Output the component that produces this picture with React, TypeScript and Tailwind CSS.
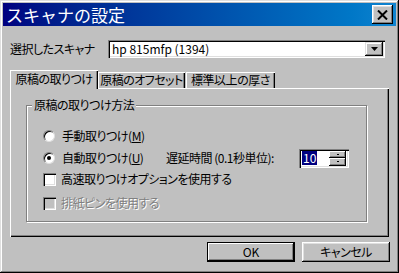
import React from 'react'

const font = "font-['Noto_Sans_CJK_JP',sans-serif] [font-feature-settings:'palt']"

function Radio({ checked }: { checked?: boolean }) {
  return (
    <div className="w-[12px] h-[12px] rounded-full bg-white border border-t-[#808080] border-l-[#808080] border-r-[#dfdfdf] border-b-[#dfdfdf] shadow-[inset_1px_1px_#000] flex items-center justify-center shrink-0">
      {checked && <div className="w-[4px] h-[4px] rounded-full bg-black" />}
    </div>
  )
}

function Check({ disabled }: { disabled?: boolean }) {
  return (
    <div
      className={`w-[13px] h-[13px] shrink-0 shadow-[inset_1px_1px_#808080,inset_2px_2px_#000,inset_-1px_-1px_#fff,inset_-2px_-2px_#dfdfdf] ${
        disabled ? 'bg-[#c0c0c0]' : 'bg-white'
      }`}
    />
  )
}

export default function App() {
  return (
    <div
      className={`w-[399px] h-[273px] bg-[#c0c0c0] p-[3px] flex flex-col text-[12px] leading-none tracking-[-0.5px] text-black shadow-[inset_-1px_-1px_#000,inset_1px_1px_#dfdfdf,inset_-2px_-2px_#808080,inset_2px_2px_#fff] ${font}`}
    >
      {/* Title bar */}
      <div className="h-[23px] flex items-center bg-gradient-to-r from-[#000080] to-[#1084d0] pl-[3px] pr-[3px]">
        <span className="text-white text-[17px] tracking-normal [font-feature-settings:normal]">スキャナの設定</span>
        <button className="ml-auto w-[21px] h-[19px] bg-[#c0c0c0] flex items-center justify-center shadow-[inset_-1px_-1px_#000,inset_1px_1px_#fff,inset_-2px_-2px_#808080,inset_2px_2px_#dfdfdf]">
          <svg width="11" height="10" viewBox="0 0 11 10">
            <path d="M1 0.5 L10 9.5 M10 0.5 L1 9.5" stroke="#000" strokeWidth="2" />
          </svg>
        </button>
      </div>

      {/* Scanner select */}
      <div className="mt-[14px] h-[18px] flex items-center pl-[7px]">
        <span className="w-[98px]">選択したスキャナ</span>
        <div className="w-[277px] h-[18px] bg-white flex items-center shadow-[inset_1px_1px_#808080,inset_2px_2px_#000,inset_-1px_-1px_#fff,inset_-2px_-2px_#dfdfdf] pl-[4px] pr-[2px]">
          <span className="[font-feature-settings:normal] tracking-normal">hp 815mfp (1394)</span>
          <div className="ml-auto w-[18px] h-[14px] bg-[#c0c0c0] flex items-center justify-center shadow-[inset_-1px_-1px_#000,inset_1px_1px_#dfdfdf,inset_-2px_-2px_#808080,inset_2px_2px_#fff]">
            <svg width="7" height="4" viewBox="0 0 7 4">
              <path d="M0 0 H7 L3.5 4 Z" fill="#000" />
            </svg>
          </div>
        </div>
      </div>

      {/* Tabs */}
      <div className="mt-[12px] ml-[7px] h-[18px] flex items-end">
        <div className="relative z-10 h-[19px] -mb-px w-[88px] bg-[#c0c0c0] flex items-center justify-center shadow-[inset_1px_1px_#fff,inset_-1px_0_#000,inset_-2px_0_#808080] pb-[2px]">
          原稿の取りつけ
        </div>
        <div className="h-[16px] w-[87px] flex items-center justify-center shadow-[inset_1px_1px_#fff,inset_-1px_0_#000,inset_-2px_0_#808080]">
          原稿のオフセット
        </div>
        <div className="ml-px h-[16px] w-[89px] flex items-center justify-center shadow-[inset_1px_1px_#fff,inset_-1px_0_#000,inset_-2px_0_#808080]">
          標準以上の厚さ
        </div>
      </div>

      {/* Panel */}
      <div className="ml-[7px] w-[379px] h-[149px] shadow-[inset_1px_1px_#fff,inset_-1px_-1px_#000,inset_-2px_-2px_#808080] pt-[17px] pl-[16px]">
        <div className="relative w-[341px] h-[117px] border border-[#808080] shadow-[inset_1px_1px_#fff,1px_1px_#fff] pl-[16px] pt-[22px]">
          <span className="absolute left-[5px] top-[-7px] bg-[#c0c0c0] px-[2px]">原稿の取りつけ方法</span>

          <div className="h-[16px] flex items-center">
            <Radio />
            <span className="ml-[7px]">
              手動取りつけ(<span className="underline">M</span>)
            </span>
          </div>

          <div className="mt-[4px] h-[20px] flex items-center">
            <div className="w-[123px] flex items-center">
              <Radio checked />
              <span className="ml-[7px]">
                自動取りつけ(<span className="underline">U</span>)
              </span>
            </div>
            <span className="w-[133px]">遅延時間 (0.1秒単位):</span>
            <div className="w-[50px] h-[19px] bg-white flex items-center shadow-[inset_1px_1px_#808080,inset_2px_2px_#000,inset_-1px_-1px_#fff,inset_-2px_-2px_#dfdfdf] pl-[3px] pr-[3px]">
              <span className="bg-[#000080] text-white px-px leading-[14px] tracking-normal [font-feature-settings:normal]">10</span>
              <div className="ml-auto w-[17px] h-[15px] flex flex-col">
                <div className="flex-1 bg-[#c0c0c0] flex items-center justify-center shadow-[inset_-1px_-1px_#000,inset_1px_1px_#fff,inset_-2px_-2px_#808080]">
                  <div className="w-[2px] h-[1px] bg-black" />
                </div>
                <div className="flex-1 bg-[#c0c0c0] flex items-center justify-center shadow-[inset_-1px_-1px_#000,inset_1px_1px_#fff,inset_-2px_-2px_#808080]">
                  <div className="w-[2px] h-[1px] bg-black" />
                </div>
              </div>
            </div>
          </div>

          <div className="mt-[3px] h-[16px] flex items-center">
            <Check />
            <span className="ml-[5px]">高速取りつけオプションを使用する</span>
          </div>

          <div className="mt-[8px] h-[16px] flex items-center">
            <Check disabled />
            <span className="ml-[5px] text-[#808080] [text-shadow:1px_1px_#fff]">排紙ピンを使用する</span>
          </div>
        </div>
      </div>

      {/* Buttons */}
      <div className="mt-[5px] flex justify-end gap-[7px] pr-[6px]">
        <button className="w-[88px] h-[20px] bg-[#c0c0c0] flex items-center justify-center tracking-normal shadow-[inset_0_0_0_1px_#000,inset_-2px_-2px_#000,inset_2px_2px_#fff,inset_-3px_-3px_#808080] [font-feature-settings:normal]">
          OK
        </button>
        <button className="w-[88px] h-[20px] bg-[#c0c0c0] flex items-center justify-center shadow-[inset_-1px_-1px_#000,inset_1px_1px_#fff,inset_-2px_-2px_#808080,inset_2px_2px_#dfdfdf]">
          キャンセル
        </button>
      </div>
    </div>
  )
}
